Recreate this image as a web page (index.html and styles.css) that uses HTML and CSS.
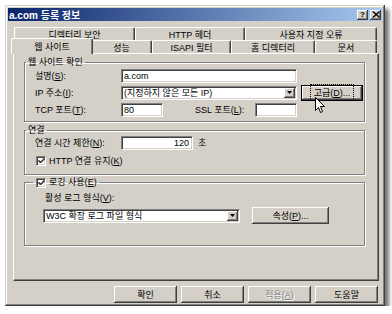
FILE: index.html
```html
<!DOCTYPE html>
<html lang="ko">
<head>
    <meta charset="UTF-8">
    <meta name="viewport" content="width=device-width, initial-scale=1.0">
    <title>a.com 등록 정보</title>
    <link rel="stylesheet" href="styles.css">
</head>
<body>
    <div class="window">
        <div class="titlebar">
            <span class="title">a.com 등록 정보</span>
            <span class="tbtn help">?</span>
            <span class="tbtn close">
                <svg width="8" height="7" viewBox="0 0 8 7"><path d="M0.5 0.5 L7 6.5 M1.5 0.5 L8 6.5 M7 0.5 L0.5 6.5 M8 0.5 L1.5 6.5" stroke="#000" stroke-width="1"/></svg>
            </span>
        </div>

        <div class="tabs">
            <div class="tabrow back">
                <div class="tab t-dir">디렉터리 보안</div>
                <div class="tab t-http">HTTP 헤더</div>
                <div class="tab t-err">사용자 지정 오류</div>
            </div>
            <div class="tabrow front">
                <div class="tab active t-web">웹 사이트</div>
                <div class="tab t-perf">성능</div>
                <div class="tab t-isapi">ISAPI 필터</div>
                <div class="tab t-home">홈 디렉터리</div>
                <div class="tab t-doc">문서</div>
            </div>
        </div>

        <div class="panel">
            <fieldset class="group g-site">
                <legend>웹 사이트 확인</legend>
                <div class="row">
                    <span class="lbl">설명(<u>S</u>):</span>
                    <div class="field long">a.com</div>
                </div>
                <div class="row">
                    <span class="lbl">IP 주소(<u>I</u>):</span>
                    <div class="field long combo">
                        <span class="val">(지정하지 않은 모든 IP)</span>
                        <span class="drop"><svg width="5" height="3" viewBox="0 0 5 3"><path d="M0 0 H5 L2.5 3 Z" fill="#000"/></svg></span>
                    </div>
                    <div class="btn default adv"><span class="focus">고급(<u>D</u>)...</span></div>
                </div>
                <div class="row">
                    <span class="lbl">TCP 포트(<u>T</u>):</span>
                    <div class="field port">80</div>
                    <span class="lbl ssl">SSL 포트(<u>L</u>):</span>
                    <div class="field port"></div>
                </div>
            </fieldset>

            <fieldset class="group g-conn">
                <legend>연결</legend>
                <div class="row">
                    <span class="lbl">연결 시간 제한(<u>N</u>):</span>
                    <div class="field timeout">120</div>
                    <span class="unit">초</span>
                </div>
                <div class="row check-row">
                    <span class="check"><svg width="7" height="7" viewBox="0 0 7 7"><path d="M0.5 3 L2.5 5 L6.5 1 M0.5 4 L2.5 6 L6.5 2" stroke="#000" fill="none"/></svg></span>
                    <span>HTTP 연결 유지(<u>K</u>)</span>
                </div>
            </fieldset>

            <fieldset class="group g-log">
                <legend>
                    <span class="check"><svg width="7" height="7" viewBox="0 0 7 7"><path d="M0.5 3 L2.5 5 L6.5 1 M0.5 4 L2.5 6 L6.5 2" stroke="#000" fill="none"/></svg></span>
                    <span>로깅 사용(<u>E</u>)</span>
                </legend>
                <div class="log-label">활성 로그 형식(<u>V</u>):</div>
                <div class="row log-row">
                    <div class="field combo logfmt">
                        <span class="val">W3C 확장 로그 파일 형식</span>
                        <span class="drop"><svg width="5" height="3" viewBox="0 0 5 3"><path d="M0 0 H5 L2.5 3 Z" fill="#000"/></svg></span>
                    </div>
                    <div class="btn props">속성(<u>P</u>)...</div>
                </div>
            </fieldset>
        </div>

        <div class="buttons">
            <div class="btn">확인</div>
            <div class="btn">취소</div>
            <div class="btn disabled">적용(<u>A</u>)</div>
            <div class="btn">도움말</div>
        </div>

        <svg class="cursor" width="11" height="17" viewBox="0 0 11 17">
            <path d="M0.5 0.5 L0.5 13.5 L3.5 10.5 L5.5 15.5 L7.5 14.5 L5.5 9.5 L9.5 9.5 Z" fill="#fff" stroke="#000" stroke-width="1"/>
        </svg>
    </div>
</body>
</html>
```

FILE: styles.css
```css
body {
    margin: 0;
    background: #fff;
    font-family: "Liberation Sans", "Noto Sans CJK KR", sans-serif;
    font-size: 9px;
    color: #000;
}
u {
    text-decoration: underline;
    text-underline-offset: 1px;
}
.window {
    position: relative;
    box-sizing: border-box;
    margin: 5px 0 0 5px;
    width: 380px;
    height: 301px;
    padding: 3px;
    background: #d4d0c8;
    box-shadow: inset -1px -1px #404040, inset 1px 1px #d4d0c8,
        inset -2px -2px #808080, inset 2px 2px #fff,
        4px 4px 4px rgba(0, 0, 0, 0.55);
}

/* title bar */
.titlebar {
    display: flex;
    align-items: center;
    height: 13px;
    padding-left: 1px;
    background: linear-gradient(to right, #0a246a, #a6caf0);
}
.title {
    flex: 1;
    color: #fff;
    font-weight: bold;
    font-size: 10px;
}
.tbtn {
    box-sizing: border-box;
    width: 11px;
    height: 10px;
    margin-right: 1px;
    display: flex;
    align-items: center;
    justify-content: center;
    background: #d4d0c8;
    font-weight: bold;
    font-size: 8px;
    box-shadow: inset -1px -1px #404040, inset 1px 1px #fff, inset -2px -2px #808080;
}
.tbtn.help {
    margin-right: 2px;
}

/* tabs */
.tabs {
    margin-top: 6px;
}
.tabrow {
    display: flex;
    height: 13px;
}
.tabrow.back {
    padding-left: 6px;
}
.tabrow.front {
    padding-left: 5px;
}
.tab {
    box-sizing: border-box;
    display: flex;
    align-items: center;
    justify-content: center;
    height: 13px;
    border-left: 1px solid #fff;
    border-top: 1px solid #fff;
    border-right: 1px solid #404040;
    border-radius: 2px 2px 0 0;
    box-shadow: inset -1px 0 #808080;
    background: #d4d0c8;
}
.t-dir { width: 121px; }
.t-http { width: 110px; }
.t-err { width: 132px; }
.t-web { width: 78px; }
.t-perf { width: 61px; }
.t-isapi { width: 79px; }
.t-home { width: 84px; }
.t-doc { width: 62px; }
.tab.active {
    position: relative;
    z-index: 2;
    height: 16px;
    margin: -2px -2px -1px -2px;
    width: 82px;
    padding-bottom: 1px;
}

/* panel */
.panel {
    box-sizing: border-box;
    width: 366px;
    height: 228px;
    margin-left: 5px;
    padding: 3px 0 0 10px;
    border-left: 1px solid #fff;
    border-top: 1px solid #fff;
    border-right: 1px solid #404040;
    border-bottom: 1px solid #404040;
    box-shadow: inset -1px -1px #808080;
}
.group {
    margin: 0;
    padding: 0;
    width: 341px;
    box-sizing: border-box;
    border: 1px solid #808080;
    box-shadow: 1px 1px 0 #fff, inset 1px 1px 0 #fff;
    min-width: 0;
}
.group legend {
    padding: 0 2px;
    margin-left: -9px;
    line-height: 11px;
    display: flex;
    align-items: center;
}
.row {
    display: flex;
    align-items: center;
    height: 15px;
}
.lbl {
    flex: none;
}
.g-site {
    padding: 0 0 4px 10px;
}
.g-site .row + .row {
    margin-top: 2px;
}
.g-site .lbl {
    width: 86px;
}
.g-site .lbl.ssl {
    width: 60px;
    margin-left: 32px;
}
.g-conn {
    margin-top: 3px;
    padding: 0 0 6px 10px;
}
.g-conn .row:first-of-type {
    margin-top: -1px;
}
.g-conn .lbl {
    width: 86px;
}
.check-row {
    margin-top: 3px;
}
.g-log {
    margin-top: 2px;
    padding: 0 0 21px 20px;
}
.g-log legend {
    margin-left: -12px;
}
.log-label {
    margin-top: 4px;
    line-height: 12px;
}
.log-row {
    height: 17px;
    margin-top: 3px;
}

/* controls */
.field {
    box-sizing: border-box;
    display: flex;
    align-items: center;
    height: 14px;
    padding: 0 1px 0 2px;
    background: #fff;
    border: 1px solid;
    border-color: #808080 #fff #fff #808080;
    box-shadow: inset 1px 1px #404040, inset -1px -1px #d4d0c8;
    white-space: nowrap;
    overflow: hidden;
}
.field.long { width: 176px; }
.field.port { width: 42px; }
.field.timeout {
    width: 72px;
    justify-content: flex-end;
    padding-right: 3px;
}
.field.logfmt {
    width: 197px;
    margin-left: -2px;
}
.combo .val {
    flex: 1;
}
.drop {
    box-sizing: border-box;
    width: 11px;
    height: 10px;
    display: flex;
    align-items: center;
    justify-content: center;
    background: #d4d0c8;
    box-shadow: inset -1px -1px #404040, inset 1px 1px #fff, inset -2px -2px #808080;
}
.unit {
    margin-left: 5px;
}
.check {
    box-sizing: border-box;
    display: inline-flex;
    align-items: center;
    justify-content: center;
    width: 10px;
    height: 10px;
    margin-right: 3px;
    margin-left: 1px;
    background: #fff;
    border: 1px solid;
    border-color: #808080 #fff #fff #808080;
    box-shadow: inset 1px 1px #404040, inset -1px -1px #d4d0c8;
}
.btn {
    box-sizing: border-box;
    display: flex;
    align-items: center;
    justify-content: center;
    height: 17px;
    background: #d4d0c8;
    box-shadow: inset -1px -1px #404040, inset 1px 1px #fff, inset -2px -2px #808080;
}
.btn.adv {
    width: 62px;
    height: 16px;
    margin-left: 4px;
}
.btn.default {
    border: 1px solid #000;
}
.focus {
    outline: 1px dotted #000;
    outline-offset: 1px;
    padding: 0 2px;
}
.btn.props {
    width: 77px;
    margin-left: 12px;
}
.buttons {
    display: flex;
    justify-content: flex-end;
    gap: 4px;
    margin-top: 5px;
    padding-right: 4px;
}
.buttons .btn {
    width: 63px;
}
.btn.disabled {
    color: #808080;
    text-shadow: 1px 1px 0 #fff;
}

.cursor {
    position: absolute;
    left: 310px;
    top: 92px;
}
```
